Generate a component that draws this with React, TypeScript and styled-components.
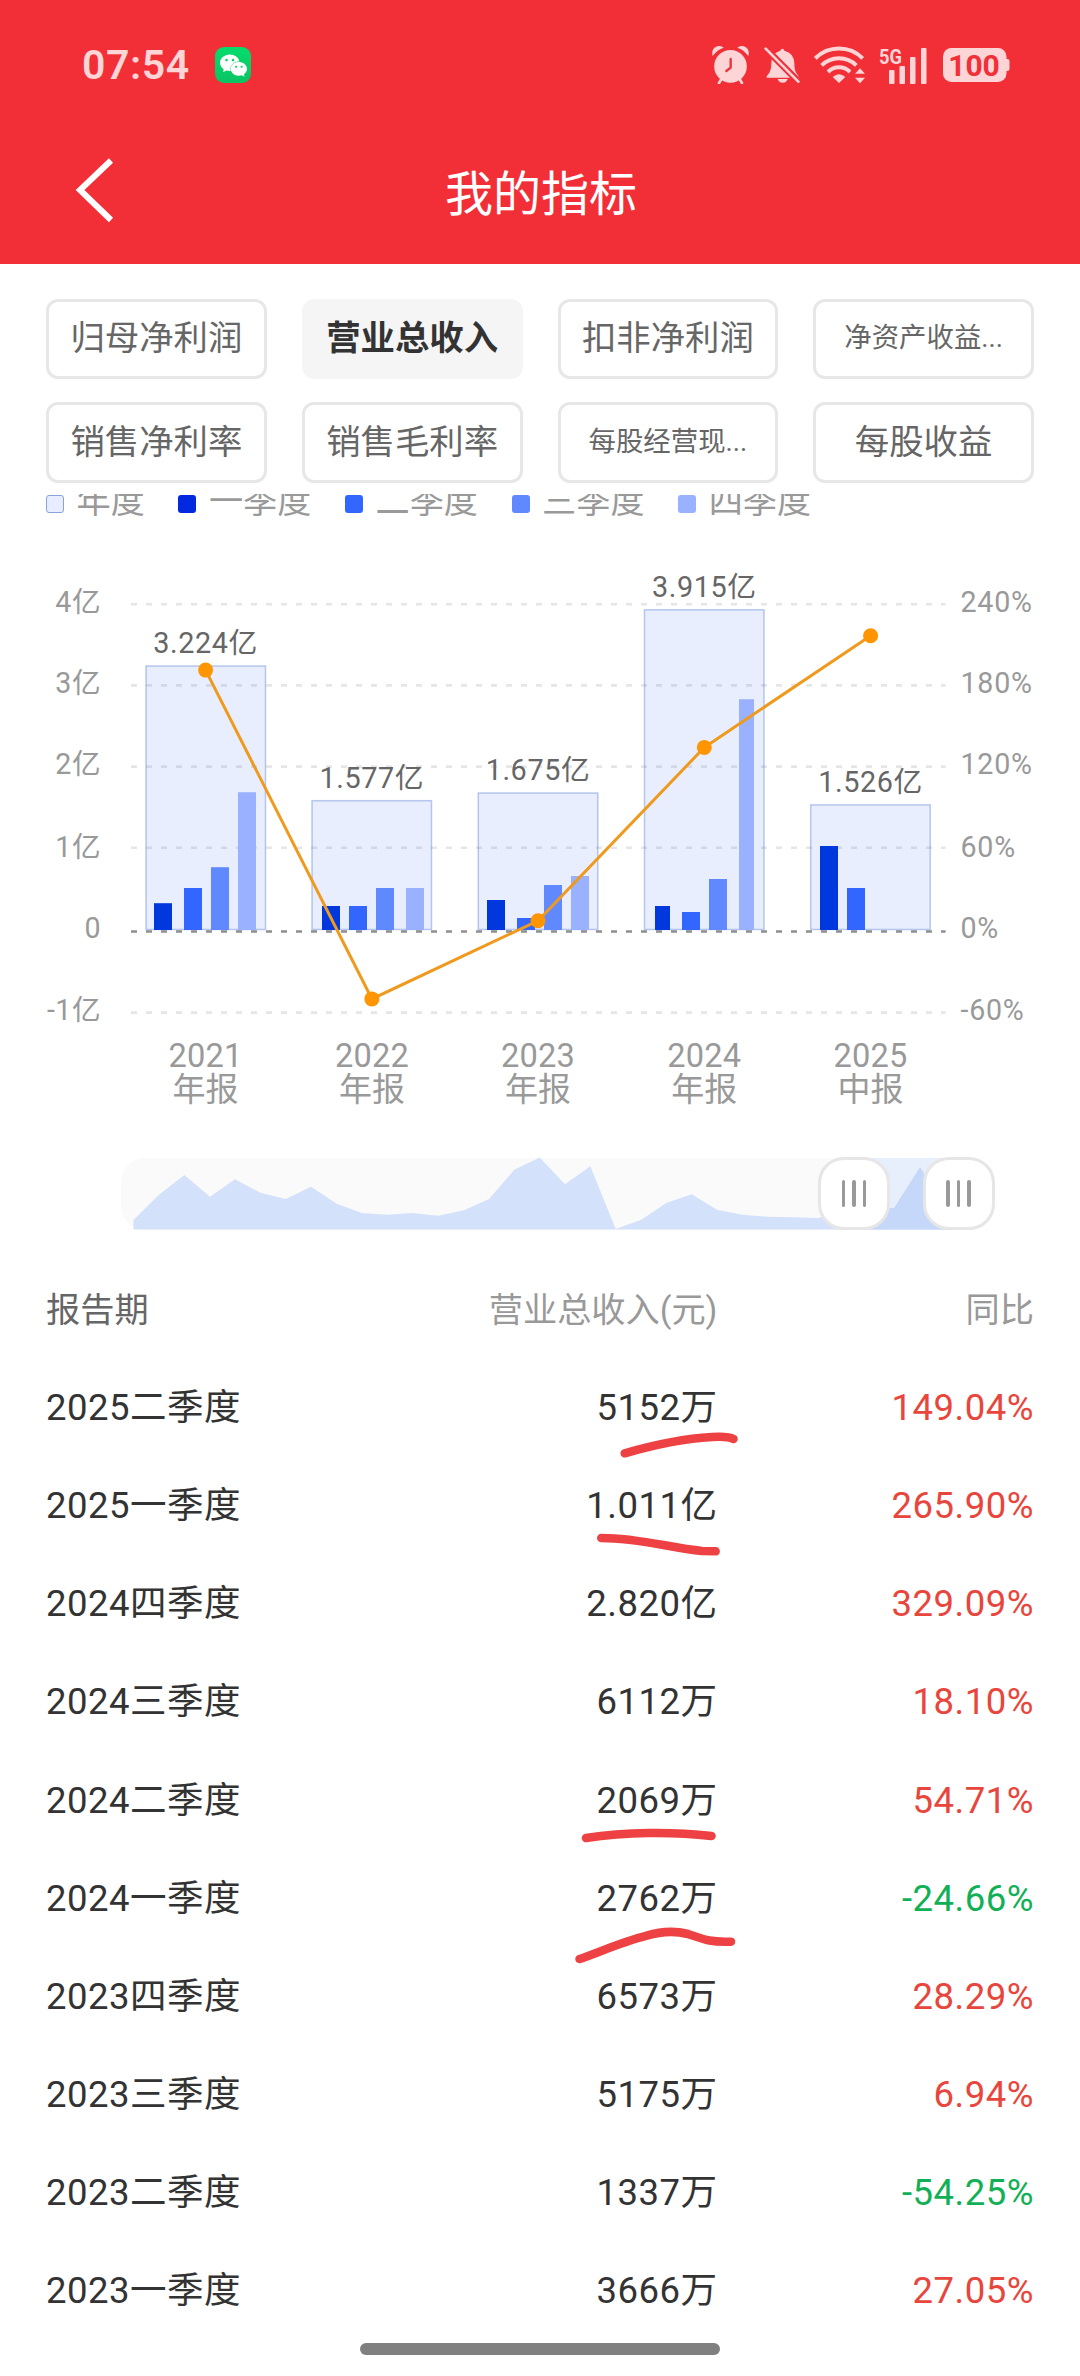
import React from 'react';
import styled, { createGlobalStyle } from 'styled-components';
import { SiWechat } from 'react-icons/si';

const RED = '#f22f37';
const PALE = '#fdd5d7';
const FONT = `Roboto, "Noto Sans CJK SC", sans-serif`;

const GlobalStyle = createGlobalStyle`
  * { box-sizing: border-box; }
  body { margin: 0; background: #fff; }
`;

const Screen = styled.div`
  display: flex;
  flex-direction: column;
  width: 1080px;
  height: 2376px;
  overflow: hidden;
  background: #fff;
  font-family: ${FONT};
  color: #333;
`;

const Header = styled.header`
  display: flex;
  flex-direction: column;
  height: 264px;
  background: ${RED};
`;

const StatusBar = styled.div`
  display: flex;
  align-items: center;
  justify-content: space-between;
  height: 130px;
  padding: 0 70px 0 82px;
`;

const StatusGroup = styled.div<{ $gap: number }>`
  display: flex;
  align-items: center;
  gap: ${(p) => p.$gap}px;
`;

const Clock = styled.span`
  width: 110px;
  font-size: 41px;
  line-height: 48px;
  font-weight: 600;
  letter-spacing: 0.6px;
  white-space: nowrap;
  color: ${PALE};
`;

const WechatBadge = styled.span`
  display: flex;
  align-items: center;
  justify-content: center;
  width: 36px;
  height: 36px;
  border-radius: 9px;
  color: #fff;
  background: linear-gradient(#06dc6c, #0ac463);
`;

const StatusIcon = styled.svg`
  display: block;
  flex: none;
`;

const TitleBar = styled.div`
  display: grid;
  grid-template-columns: 161px 1fr 159px;
  align-items: center;
  height: 126px;
`;

const BackButton = styled.button`
  display: flex;
  padding: 0 0 6px 74px;
  border: 0;
  background: none;
`;

const Title = styled.h1`
  margin: 3px 0 0;
  font-size: 48px;
  line-height: 60px;
  font-weight: 400;
  text-align: center;
  color: #fff;
`;

const MetricGrid = styled.section`
  display: grid;
  grid-template-columns: repeat(4, 1fr);
  grid-template-rows: 80px 81px;
  gap: 23px 35px;
  height: 230px;
  padding: 35px 46px 0;
`;

const Metric = styled.button<{ $active?: boolean; $small?: boolean }>`
  padding: 0 0 2px;
  border: 3px solid ${(p) => (p.$active ? '#f5f5f5' : '#e7e7e7')};
  border-radius: 12px;
  background: ${(p) => (p.$active ? '#f5f5f5' : '#fff')};
  font-family: ${FONT};
  font-size: ${(p) => (p.$small ? 27.4 : 34.4)}px;
  line-height: 40px;
  font-weight: ${(p) => (p.$active ? 700 : 400)};
  white-space: nowrap;
  color: ${(p) => (p.$active ? '#333' : '#666')};
`;

const LegendClip = styled.section`
  height: 46px;
  padding: 0 46px;
  overflow: hidden;
`;

const Legend = styled.div`
  display: flex;
  gap: 33.5px;
  margin-top: -9px;
`;

const LegendItem = styled.span`
  display: flex;
  align-items: center;
  gap: 12.5px;
  font-size: 34.2px;
  line-height: 38px;
  color: #999;
`;

const LegendLabel = styled.span`
  margin: -3px 0 3px;
`;

const Swatch = styled.i<{ $color: string; $outlined?: boolean }>`
  width: 18px;
  height: 18px;
  border-radius: 3px;
  border: ${(p) => (p.$outlined ? '1px solid #86a3dc' : '0')};
  background: ${(p) => p.$color};
`;

const Chart = styled.svg`
  display: block;
  flex: none;
  font-family: ${FONT};
`;

const SliderRow = styled.section`
  height: 131px;
  padding: 28px 86px 0 121px;
`;

const Track = styled.div`
  position: relative;
  height: 72px;
  border-radius: 24px;
  background: #fafafa;
`;

const Preview = styled.svg`
  display: block;
`;

const Handle = styled.span<{ $left: number }>`
  position: absolute;
  top: -1px;
  left: ${(p) => p.$left}px;
  display: flex;
  align-items: center;
  justify-content: center;
  gap: 7px;
  width: 72px;
  height: 73px;
  border: 3px solid #e6e6e6;
  border-radius: 26px;
  background: #fff;
`;

const Grip = styled.i`
  width: 3.6px;
  height: 27px;
  border-radius: 2px;
  background: #999;
`;

const Table = styled.section`
  position: relative;
  padding: 0 46px;
`;

const Row = styled.div<{ $head?: boolean }>`
  display: grid;
  grid-template-columns: 300px 371.500px 1fr;
  align-items: center;
  height: 98.1px;
  font-size: ${(p) => (p.$head ? 34.2 : 36.5)}px;
  line-height: 44px;
  letter-spacing: ${(p) => (p.$head ? 0 : 0.5)}px;
  color: ${(p) => (p.$head ? '#999' : '#333')};
`;

const Period = styled.span<{ $head?: boolean }>`
  color: ${(p) => (p.$head ? '#666' : 'inherit')};
`;

const Amount = styled.span`
  text-align: right;
`;

const Change = styled.span<{ $tone?: 'up' | 'down' }>`
  text-align: right;
  color: ${(p) => (p.$tone === 'up' ? '#e8463c' : p.$tone === 'down' ? '#12b056' : 'inherit')};
`;

const Marks = styled.svg`
  position: absolute;
  left: 0;
  top: 0;
  pointer-events: none;
`;

const HomeBar = styled.div`
  width: 360px;
  height: 12px;
  margin: 2.8px auto 0;
  border-radius: 6px;
  background: #808080;
`;

const metrics = [
  { label: '归母净利润' },
  { label: '营业总收入', active: true },
  { label: '扣非净利润' },
  { label: '净资产收益...', small: true },
  { label: '销售净利率' },
  { label: '销售毛利率' },
  { label: '每股经营现...', small: true },
  { label: '每股收益' },
];

const legend = [
  { label: '年度', color: '#e8eeff', outlined: true },
  { label: '一季度', color: '#0029e0' },
  { label: '二季度', color: '#3366ff' },
  { label: '三季度', color: '#6088ff' },
  { label: '四季度', color: '#99b1ff' },
];

const gridLines = [
  { y: 604.3, left: '4亿', right: '240%', base: 611.6 },
  { y: 685.4, left: '3亿', right: '180%', base: 693 },
  { y: 766.6, left: '2亿', right: '120%', base: 774.4 },
  { y: 847.7, left: '1亿', right: '60%', base: 856.6 },
  { y: 931.5, left: '0', right: '0%', base: 937.8, zero: true },
  { y: 1012.6, left: '-1亿', right: '-60%', base: 1019.6 },
];

const quarterColors = ['#0038de', '#3366ff', '#6088ff', '#99b1ff'];
const BASE = 930;

const years = [
  { year: '2021', kind: '年报', value: '3.224亿', x: 145.5, cx: 205.6, top: 665.5, dot: 670.1,
    bars: [[154, 18, 903.2], [184, 18, 888], [211, 18, 867.2], [238, 18, 792.2]] },
  { year: '2022', kind: '年报', value: '1.577亿', x: 311.5, cx: 371.9, top: 800.2, dot: 998.9,
    bars: [[322, 18, 906], [349, 18, 906], [376, 18, 888], [406, 18, 888]] },
  { year: '2023', kind: '年报', value: '1.675亿', x: 477.8, cx: 538, top: 792.5, dot: 920.8,
    bars: [[487, 18, 900], [517, 18, 918], [544, 18, 885], [571, 18, 876]] },
  { year: '2024', kind: '年报', value: '3.915亿', x: 644, cx: 704.3, top: 609.3, dot: 747.4,
    bars: [[655, 15, 906], [682, 18, 912], [709, 18, 879], [739, 15, 699.2]] },
  { year: '2025', kind: '中报', value: '1.526亿', x: 810.2, cx: 870.6, top: 804.4, dot: 635.7,
    bars: [[820, 18, 846], [847, 18, 888]] },
];

const previewLine =
  '133.5,1220 159,1194.7 184.3,1175 210,1196.7 235,1179.3 260.3,1192.7 285.7,1199 311,1186.7 336.7,1203.7 361.7,1213 387,1214.7 412.3,1213 438.3,1215.7 464,1210.3 489,1199 514.3,1169.7 539.7,1157.5 565,1184.3 590.3,1166.3 615.7,1229 641.3,1219.7 666.3,1203 691.7,1194.3 717,1209.7 742.3,1214.7 767.7,1216.7 793.3,1217.3 818.3,1218 843.7,1210 869,1209 894,1208 920,1167 946,1207 970,1215';
const previewArea = `133.5,1229.5 ${previewLine} 970,1229.5`;

const rows: [string, string, string][] = [
  ['2025二季度', '5152万', '149.04%'],
  ['2025一季度', '1.011亿', '265.90%'],
  ['2024四季度', '2.820亿', '329.09%'],
  ['2024三季度', '6112万', '18.10%'],
  ['2024二季度', '2069万', '54.71%'],
  ['2024一季度', '2762万', '-24.66%'],
  ['2023四季度', '6573万', '28.29%'],
  ['2023三季度', '5175万', '6.94%'],
  ['2023二季度', '1337万', '-54.25%'],
  ['2023一季度', '3666万', '27.05%'],
];

const strokes = [
  'M624.7 1453.3 C650 1446 685 1438.5 712 1437 C722 1436.300 729 1436.500 733.5 1439',
  'M601.3 1538 C640 1538 670 1548 702 1551 L715.6 1551.3',
  'M586 1838 C625 1832 672 1831.500 711.5 1836',
  'M579.6 1959 C600 1952 622 1942 646.7 1935.700 C662 1931 676 1931 688 1934 C704 1939.500 710 1942.500 731 1941.7',
];

function AlarmIcon() {
  return (
    <StatusIcon width="38" height="38" viewBox="96 77 114 114" fill={PALE}>
      <circle cx="151.500" cy="138" r="49" />
      <path d="M98 107 Q93 88 107 80 Q120 73 131 82 Q112 88 98 107Z" />
      <path d="M205 107 Q210 88 196 80 Q183 73 172 82 Q191 88 205 107Z" />
      <path d="M125 175l-8 13M178 175l8 13" stroke={PALE} strokeWidth="8" strokeLinecap="round" />
      <path d="M152 116v26l-13 10" fill="none" stroke={RED} strokeWidth="7" strokeLinecap="round" strokeLinejoin="round" />
    </StatusIcon>
  );
}

function MutedBellIcon() {
  return (
    <StatusIcon width="36" height="36" viewBox="251 79 108 108" fill={PALE}>
      <path d="M300 90 Q301 84 306 84 Q311 84 312 90 Q342 98 342 128 Q342 152 350 160 Q356 166 355 171 H260 Q256 169 262 163 Q273 152 273 128 Q273 98 300 90Z" />
      <path d="M292 175h30q-3 11-15 11t-15-11Z" />
      <path d="M252 80L362 190" stroke={RED} strokeWidth="20" />
      <path d="M256 84L354 183" stroke={PALE} strokeWidth="8" strokeLinecap="round" />
    </StatusIcon>
  );
}

function WifiIcon() {
  return (
    <StatusIcon width="51" height="38" viewBox="402 77 153 114" fill={PALE}>
      <g fill="none" stroke={PALE} strokeWidth="12">
        <path d="M406 114A101 101 0 0 1 548 114" />
        <path d="M425 135A74 74 0 0 1 529 135" />
        <path d="M444 155A46 46 0 0 1 510 155" />
      </g>
      <path d="M458 170Q477 153 496 170L477 188Z" />
      <path d="M525 160L540 144L555 160ZM525 172H555L540 189Z" />
    </StatusIcon>
  );
}

function SignalIcon() {
  return (
    <StatusIcon width="50" height="38" viewBox="0 0 50 38" fill={PALE}>
      <text x="0" y="17.5" fontFamily="Roboto, sans-serif" fontSize="21" fontWeight="700" textLength="23" lengthAdjust="spacingAndGlyphs">5G</text>
      <rect x="10" y="24" width="5.500" height="14" rx="1" />
      <rect x="20.500" y="20" width="5.500" height="18" rx="1" />
      <rect x="31" y="11" width="5.500" height="27" rx="1" />
      <rect x="42" y="2" width="5.500" height="36" rx="1" />
    </StatusIcon>
  );
}

function BatteryIcon() {
  return (
    <StatusIcon width="67" height="34" viewBox="0 0 67 34" fill={PALE}>
      <rect width="63.500" height="34" rx="8.500" />
      <path d="M63 11h1.500a2 2 0 0 1 2 2v8a2 2 0 0 1-2 2H63Z" />
      <text x="31" y="28" fill={RED} fontFamily="Roboto, sans-serif" fontSize="30" fontWeight="700" textAnchor="middle">100</text>
    </StatusIcon>
  );
}

function RevenueChart() {
  return (
    <Chart width="1080" height="590" viewBox="0 540 1080 590">
      {gridLines.map((g) => (
        <g key={g.left} fontSize="28.6" letterSpacing="0.5" fill="#999">
          <line x1="131" x2="945.6" y1={g.y} y2={g.y} stroke={g.zero ? '#8f8f8f' : '#e6e6e6'} strokeWidth="2.6" strokeDasharray="6 9" />
          <text x="101" y={g.base} textAnchor="end">{g.left}</text>
          <text x="960.6" y={g.base} letterSpacing="0.7">{g.right}</text>
        </g>
      ))}
      {years.map((d) => (
        <g key={d.year}>
          <rect x={d.x + 0.5} y={d.top + 0.5} width="119.5" height={BASE - d.top - 1} fill="rgba(51,102,255,.11)" stroke="rgba(70,110,200,.36)" strokeWidth="1.5" />
          {d.bars.map(([x, w, top], i) => (
            <rect key={x} x={x} y={top} width={w} height={BASE - top} fill={quarterColors[i]} />
          ))}
        </g>
      ))}
      <polyline points={years.map((d) => `${d.cx},${d.dot}`).join(' ')} fill="none" stroke="#ef9a1d" strokeWidth="3" />
      {years.map((d) => (
        <g key={d.year} textAnchor="middle">
          <circle cx={d.cx} cy={d.dot} r="7.5" fill="#ff9500" />
          <text x={d.cx} y={d.top - 12.5} fontSize="28.8" letterSpacing="0.6" fill="#666">{d.value}</text>
          <text x={d.cx} y="1067" fontSize="32.600" letterSpacing="0.2" fill="#999">{d.year}</text>
          <text x={d.cx} y="1100.500" fontSize="33" fill="#999">{d.kind}</text>
        </g>
      ))}
    </Chart>
  );
}

function RangeSlider() {
  return (
    <SliderRow>
      <Track>
        <Preview width="873" height="72" viewBox="121 1158 873 72" overflow="visible">
          <polygon points={previewArea} fill="#d3e1fa" />
          <rect x="853" y="1158" width="105" height="71.5" fill="#e8effc" />
          <clipPath id="selected"><rect x="853" y="1150" width="105" height="80" /></clipPath>
          <polygon points={previewArea} fill="#c5d8fa" clipPath="url(#selected)" />
        </Preview>
        {[697, 801.5].map((left) => (
          <Handle key={left} $left={left}><Grip /><Grip /><Grip /></Handle>
        ))}
      </Track>
    </SliderRow>
  );
}

export default function App() {
  return (
    <Screen>
      <GlobalStyle />
      <Header>
        <StatusBar>
          <StatusGroup $gap={23}>
            <Clock>07:54</Clock>
            <WechatBadge><SiWechat size={27} /></WechatBadge>
          </StatusGroup>
          <StatusGroup $gap={14}>
            <AlarmIcon />
            <MutedBellIcon />
            <WifiIcon />
            <SignalIcon />
            <BatteryIcon />
          </StatusGroup>
        </StatusBar>
        <TitleBar>
          <BackButton aria-label="返回">
            <svg width="42" height="66" viewBox="74 156 42 66" fill="none">
              <path d="M111 159.500L80 189L111 219" stroke="#fff" strokeWidth="6" />
            </svg>
          </BackButton>
          <Title>我的指标</Title>
        </TitleBar>
      </Header>
      <MetricGrid>
        {metrics.map((m) => (
          <Metric key={m.label} $active={m.active} $small={m.small}>{m.label}</Metric>
        ))}
      </MetricGrid>
      <LegendClip>
        <Legend>
          {legend.map((l) => (
            <LegendItem key={l.label}>
              <Swatch $color={l.color} $outlined={l.outlined} />
              <LegendLabel>{l.label}</LegendLabel>
            </LegendItem>
          ))}
        </Legend>
      </LegendClip>
      <RevenueChart />
      <RangeSlider />
      <Table>
        <Row $head>
          <Period $head>报告期</Period>
          <Amount>营业总收入(元)</Amount>
          <Change>同比</Change>
        </Row>
        {rows.map(([period, amount, change]) => (
          <Row key={period}>
            <Period>{period}</Period>
            <Amount>{amount}</Amount>
            <Change $tone={change.startsWith('-') ? 'down' : 'up'}>{change}</Change>
          </Row>
        ))}
        <Marks width="1080" height="1080" viewBox="0 1261 1080 1080" fill="none" stroke="#ee4143" strokeWidth="8.600" strokeLinecap="round">
          {strokes.map((d) => <path key={d} d={d} />)}
        </Marks>
      </Table>
      <HomeBar />
    </Screen>
  );
}
